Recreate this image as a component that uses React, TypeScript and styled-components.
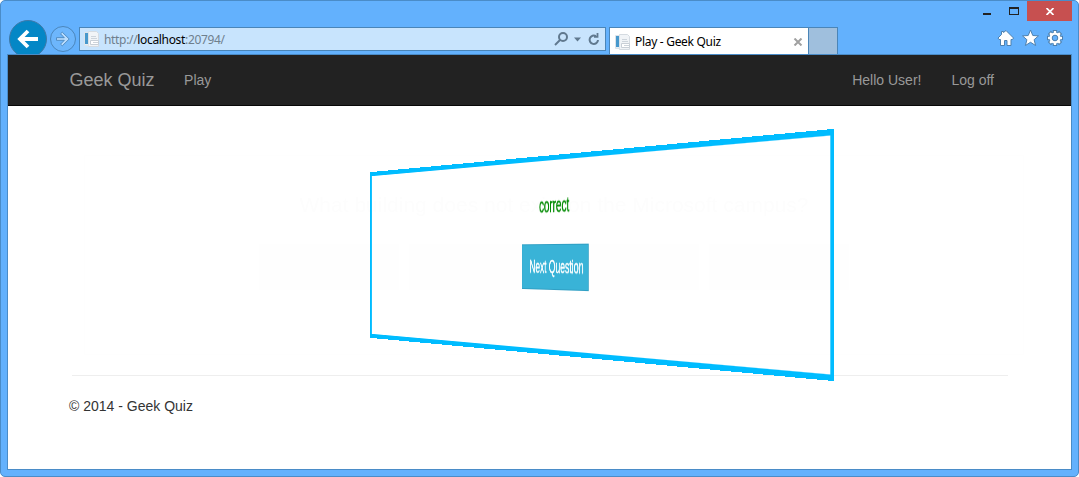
import React from "react";
import styled, { createGlobalStyle } from "styled-components";

const Global = createGlobalStyle`
  * { box-sizing: border-box; }
  body { margin: 0; background: #fff; font-family: "Liberation Sans", Arial, sans-serif; overflow: hidden; }
`;

const Window = styled.div`
  width: 1079px;
  height: 477px;
  padding: 0 6px 6px 6px;
  display: flex;
  flex-direction: column;
  background: #63b1fd;
  border: 1px solid #4a8cc8;
  border-radius: 5px;
`;

const Chrome = styled.div`
  height: 53px;
  display: flex;
  flex-direction: column;
`;

const TitleBar = styled.div`
  height: 20px;
  display: flex;
  justify-content: flex-end;
  flex: none;
`;

const WindowButton = styled.div<{ $w: number; $close?: boolean }>`
  width: ${(p) => p.$w}px;
  height: 20px;
  display: flex;
  align-items: center;
  justify-content: center;
  background: ${(p) => (p.$close ? "#c75050" : "transparent")};
`;

const Toolbar = styled.div`
  height: 33px;
  display: flex;
  align-items: flex-start;
  padding-left: 1px;
`;

const NavIcons = styled.svg`
  width: 70px;
  height: 34px;
  flex: none;
  margin: -1px 1px 0 0;
`;

const AddressBar = styled.div`
  width: 527px;
  height: 24px;
  margin-top: 6px;
  padding: 0 5px 0 4px;
  display: flex;
  align-items: center;
  background: #c8e4fd;
  border: 1px solid #4a85b8;
  flex: none;
`;

const Url = styled.div`
  flex: 1;
  margin-left: 4px;
  font: 12px "Noto Sans", sans-serif;
  letter-spacing: -0.33px;
  color: #6f7f8d;
  b { font-weight: 400; color: #000; }
`;

const Tab = styled.div`
  width: 200px;
  height: 28px;
  margin: 6px 0 0 3px;
  padding: 0 5px 0 5px;
  display: flex;
  align-items: center;
  background: #fff;
  border: 1px solid #4a85b8;
  border-bottom: 0;
  flex: none;
`;

const TabTitle = styled.div`
  flex: 1;
  margin-left: 4px;
  font: 12px "Noto Sans", sans-serif;
  letter-spacing: -0.3px;
  color: #000;
`;

const NewTab = styled.div`
  width: 29px;
  height: 28px;
  margin-top: 6px;
  background: #9fbfdd;
  border: 1px solid #4a85b8;
  border-width: 1px 1px 0 0;
`;

const Tools = styled.svg`
  width: 68px;
  height: 22px;
  margin: 6px 7px 0 auto;
`;

const Page = styled.div`
  flex: 1;
  display: flex;
  flex-direction: column;
  background: #fff;
  border: 1px solid #4a8cc8;
`;

const NavBar = styled.nav`
  height: 51px;
  padding: 0 77px 0 61.5px;
  display: flex;
  align-items: center;
  gap: 30px;
  background: #222;
  border-bottom: 1px solid #080808;
  color: #999;
  font-size: 14px;
`;

const Brand = styled.span`
  font-size: 18px;
  margin-right: -0.5px;
`;

const Spacer = styled.div`
  flex: 1;
`;

const Stage = styled.main`
  height: 269px;
  padding: 49px 0 0 76px;
  display: grid;
  grid-template: 200px / 940px;
  perspective: 2000px;
  perspective-origin: 546px 149px;
`;

const FadingQuestion = styled.section`
  grid-area: 1 / 1;
  padding-top: 37px;
  display: flex;
  flex-direction: column;
  align-items: center;
  border: 1px solid #fefefe;
  color: #fdfdfd;
  font-size: 21px;
  line-height: 24px;
`;

const Options = styled.div`
  margin-top: 27px;
  display: flex;
  gap: 10px;
`;

const Option = styled.div`
  width: 140px;
  height: 46px;
  background: #fefefe;
`;

const Card = styled.section`
  grid-area: 1 / 1;
  padding-top: 34px;
  display: flex;
  flex-direction: column;
  align-items: center;
  border: 5px solid #00bcff;
  transform: rotateY(-61.8deg);
`;

const Answer = styled.div`
  height: 22px;
  line-height: 22px;
  font-size: 21px;
  color: #008a00;
  -webkit-text-stroke: 0.5px #008a00;
`;

const NextButton = styled.button`
  width: 141px;
  height: 46px;
  margin: 28px 0 0 0;
  padding: 0 0 0 8px;
  border: 1px solid #2f9fc4;
  background: #39b3d7;
  color: #fff;
  font: 18px "Liberation Sans", Arial, sans-serif;
  -webkit-text-stroke: 0.4px #fff;
  white-space: nowrap;
`;

const Rule = styled.hr`
  width: 936px;
  height: 1px;
  margin: 0 0 0 64px;
  border: 0;
  background: #eee;
`;

const Footer = styled.footer`
  margin: 21px 0 0 61px;
  font-size: 14px;
  line-height: 18px;
  color: #333;
`;

const PageIcon = () => (
  <svg width="16" height="16" viewBox="0 0 16 16">
    <path d="M4.500 .5h8l2 2v13h-10z" fill="#f1f4f7" stroke="#d5dbe1" />
    <path d="M.5 1.500h4v13h-4z" fill="#e5edf4" stroke="#dbe3ea" />
    <path d="M1 2h3v11H1z" fill="#4798cc" />
    <path d="M7 5h5v1H7zM7 7h6v1H7z" fill="#cdd4db" />
    <path d="M6.500 9.500h8v4h-8z" fill="#fff" stroke="#c8cfd6" />
    <path d="M9 11h5v1H9z" fill="#cdd4db" />
  </svg>
);

export default function App() {
  return (
    <>
      <Global />
      <Window>
        <Chrome>
          <TitleBar>
            <WindowButton $w={27}>
              <svg width="8" height="12"><path d="M0 8h8v2H0z" fill="#222" /></svg>
            </WindowButton>
            <WindowButton $w={27}>
              <svg width="10" height="8"><path d="M0 0h10v8H0zM1 2v5h8V2z" fill="#222" fillRule="evenodd" /></svg>
            </WindowButton>
            <WindowButton $w={45} $close>
              <svg width="8" height="7" viewBox="0 0 8 7"><path d="M.5 0l7 7M7.500 0l-7 7" stroke="#fff" strokeWidth="1.700" /></svg>
            </WindowButton>
          </TitleBar>
          <Toolbar>
            <NavIcons viewBox="8 20 70 34">
              <circle cx="28" cy="39" r="18.500" fill="#0487c6" stroke="#3f79a8" />
              <path d="M38 39H20M28 31L20 39l8 8" fill="none" stroke="#fff" strokeWidth="3.800" />
              <circle cx="63" cy="39" r="12.500" fill="#6db6fc" stroke="#4b86bb" />
              <path d="M56.500 37.700h7.800l-3.800-3.900 1.800-1.600 6.900 6.800-6.900 6.800-1.800-1.600 3.800-3.900h-7.800z" fill="#b9dcfd" stroke="#4b86bb" strokeWidth=".9" />
            </NavIcons>
            <AddressBar>
              <PageIcon />
              <Url>http://<b>localhost</b>:20794/</Url>
              <svg width="46" height="16" viewBox="0 0 46 16" fill="none" stroke="#60798f" strokeWidth="2">
                <circle cx="9" cy="6" r="4" />
                <path d="M6 9l-5 5" />
                <path d="M20 6.500h7l-3.500 4z" fill="#60798f" stroke="none" />
                <path d="M42 5.200A4.200 4.200 0 1 0 44 9" />
                <path d="M40 5.800H43.500V2" strokeWidth="1.800" />
              </svg>
            </AddressBar>
            <Tab>
              <PageIcon />
              <TabTitle>Play - Geek Quiz</TabTitle>
              <svg width="10" height="8" viewBox="0 0 10 8"><path d="M1.500 .5l7 7M8.500 .5l-7 7" stroke="#a0a0a0" strokeWidth="2" /></svg>
            </Tab>
            <NewTab />
            <Tools viewBox="997 27 68 22" fill="#fff" stroke="#4d80ae">
              <path d="M1006 30.500l7.500 7.500-1 1.500h-1.500v6h-4v-5h-2.500v5h-4v-6h-1.500l-1-1.500 3.500-3.500v-3h2v1z" />
              <path d="M1030.500 30l2.300 5.500 5.700.4-4.400 3.800 1.500 5.800-5.100-3.200-5.100 3.200 1.500-5.800-4.400-3.800 5.700-.4z" />
              <g transform="translate(1055 38)">
                {[0, 45, 90, 135].map((a) => (
                  <rect key={a} x="-1.700" y="-7.500" width="3.400" height="15" transform={`rotate(${a})`} />
                ))}
                <circle r="4.200" fill="none" stroke="#fff" strokeWidth="2.600" />
                <circle r="2.800" fill="#63b1fd" />
              </g>
            </Tools>
          </Toolbar>
        </Chrome>
        <Page>
          <NavBar>
            <Brand>Geek Quiz</Brand>
            <span>Play</span>
            <Spacer />
            <span>Hello User!</span>
            <span>Log off</span>
          </NavBar>
          <Stage>
            <FadingQuestion>
              What building does not exist on the Microsoft campus?
              <Options>
                <Option />
                <Option />
                <Option />
                <Option />
              </Options>
            </FadingQuestion>
            <Card>
              <Answer>correct</Answer>
              <NextButton>Next Question</NextButton>
            </Card>
          </Stage>
          <Rule />
          <Footer>© 2014 - Geek Quiz</Footer>
        </Page>
      </Window>
    </>
  );
}
